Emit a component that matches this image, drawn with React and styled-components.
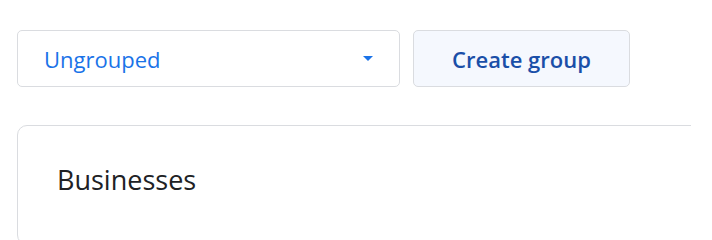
import React from "react";
import styled, { createGlobalStyle } from "styled-components";

const GlobalStyle = createGlobalStyle`
  html, body {
    margin: 0;
    padding: 0;
    background: #ffffff;
  }
`;

const Page = styled.div`
  padding: 30px 0 0 17px;
  width: 674px;
  height: 210px;
  overflow: hidden;
  font-family: "Open Sans", Roboto, Arial, sans-serif;
`;

const Toolbar = styled.div`
  display: flex;
  flex-flow: row nowrap;
  align-items: center;
  gap: 13px;
`;

const Select = styled.button`
  width: 383px;
  height: 57px;
  box-sizing: border-box;
  display: flex;
  align-items: center;
  justify-content: space-between;
  padding: 0 26px 0 26px;
  background: #ffffff;
  border: 1px solid #dadce0;
  border-radius: 5px;
  font-family: inherit;
  font-size: 22px;
  font-weight: 400;
  color: #1a73e8;
  cursor: pointer;
`;

const Caret = styled.span`
  width: 0;
  height: 0;
  border-left: 5px solid transparent;
  border-right: 5px solid transparent;
  border-top: 5px solid #1a73e8;
`;

const CreateButton = styled.button`
  width: 217px;
  height: 57px;
  box-sizing: border-box;
  background: #f5f8fe;
  border: 1px solid #dadce0;
  border-radius: 5px;
  font-family: inherit;
  font-size: 22px;
  font-weight: 600;
  color: #1a4fa8;
  cursor: pointer;
`;

const Card = styled.section`
  margin-top: 38px;
  width: 720px;
  height: 120px;
  box-sizing: border-box;
  border: 1px solid #dadce0;
  border-radius: 10px;
  padding: 35px 0 0 39px;
`;

const CardTitle = styled.h2`
  margin: 0;
  font-size: 27px;
  font-weight: 400;
  color: #202124;
`;

const App = () => {
  return (
    <>
      <GlobalStyle />
      <Page>
        <Toolbar>
          <Select>
            <span>Ungrouped</span>
            <Caret />
          </Select>
          <CreateButton>Create group</CreateButton>
        </Toolbar>
        <Card>
          <CardTitle>Businesses</CardTitle>
        </Card>
      </Page>
    </>
  );
};

export default App;
